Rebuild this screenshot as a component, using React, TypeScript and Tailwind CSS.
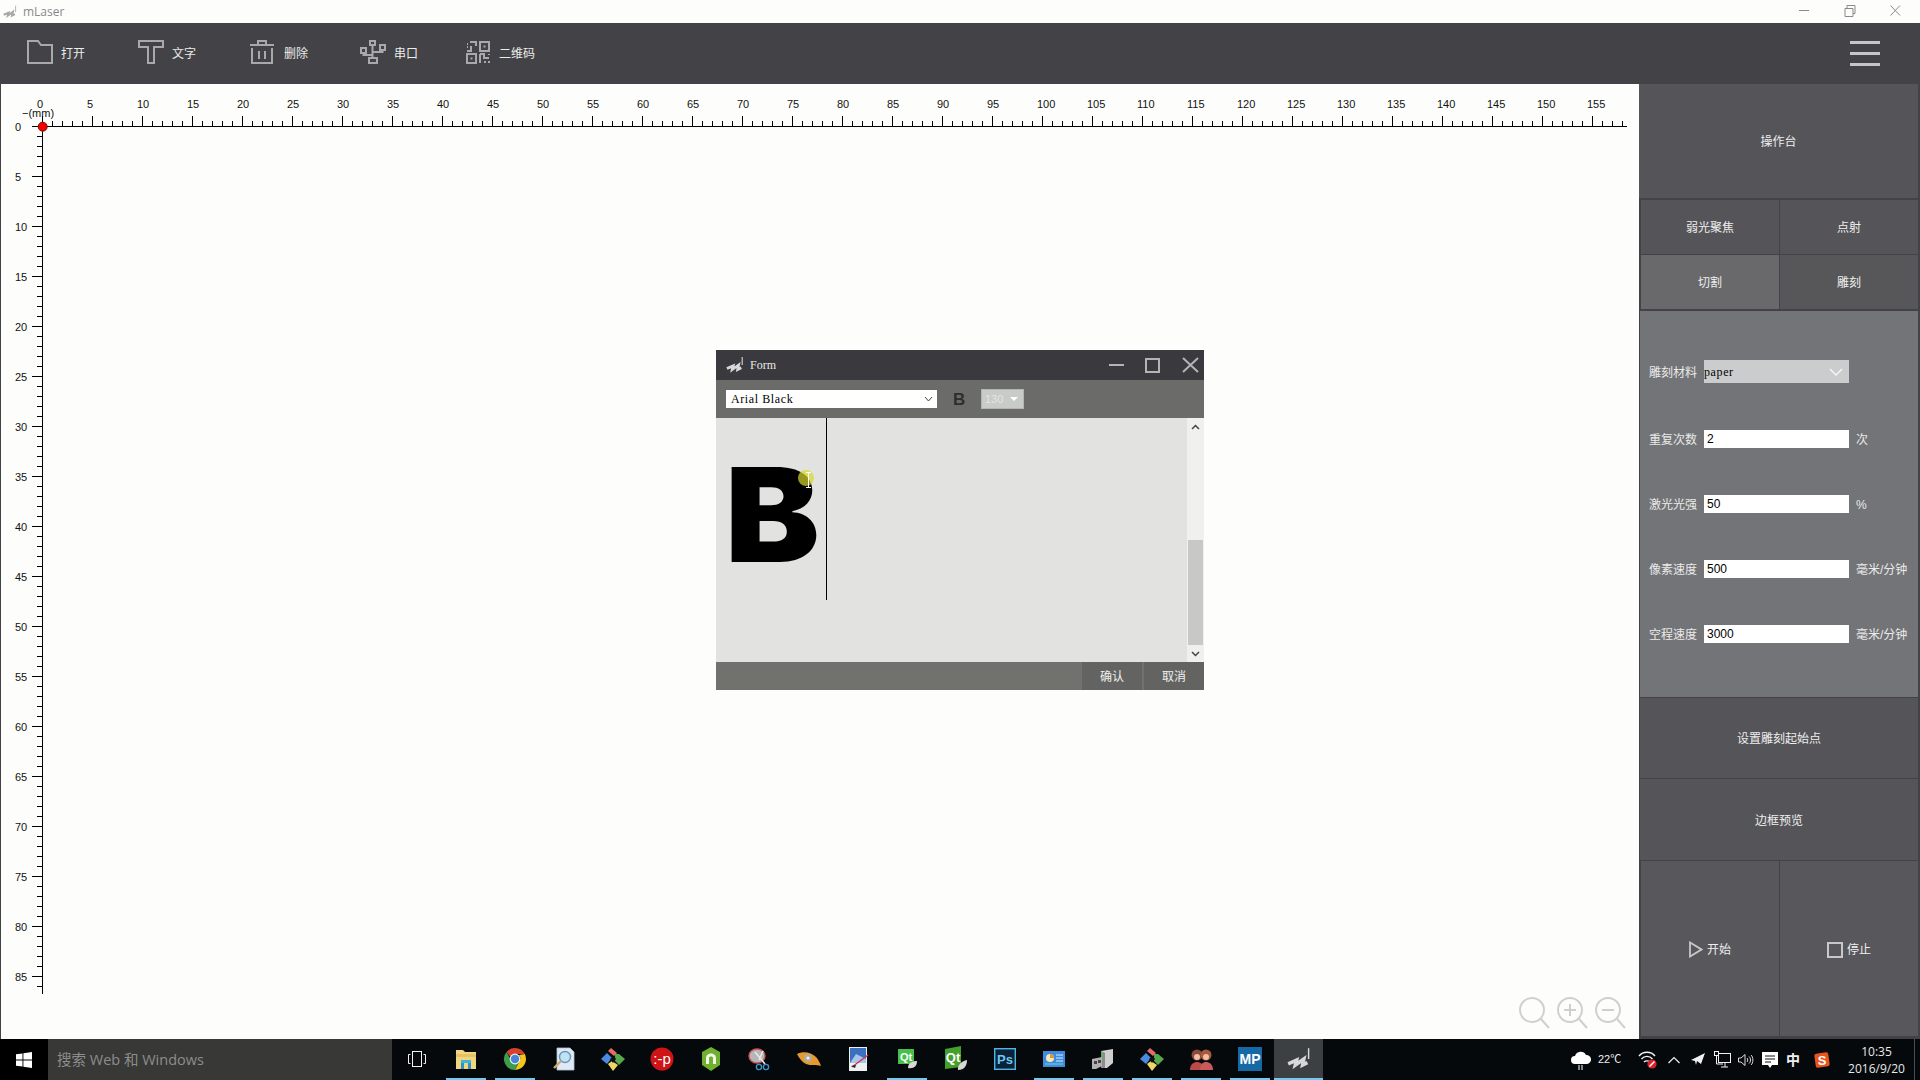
import type { ReactNode } from "react";

const cjk = "font-['Liberation_Sans','Noto_Sans_CJK_SC',sans-serif]";
const bitmapLike = "font-['Liberation_Serif','Noto_Sans_CJK_SC',serif]";

const ORIGIN_X = 42.5;
const ORIGIN_Y = 126.5;

function Logo({ size, color }: { size: number; color: string }) {
  return (
    <svg width={size} height={size} viewBox="0 0 20 20" fill="none">
      <path d="M1 14l7-3-1 4 7-5-1 5 4-2" stroke={color} strokeWidth="3" />
      <path d="M18 1v9" stroke={color} strokeWidth="1.2" />
    </svg>
  );
}

function Ruler() {
  const xs = Array.from({ length: 159 }, (_, i) => i);
  const ys = Array.from({ length: 87 }, (_, i) => i);
  return (
    <svg width="1638" height="955" viewBox="1 84 1638 955" className="block">
      <g stroke="#000" strokeWidth="1" shapeRendering="crispEdges">
        <path d={`M32 ${ORIGIN_Y}H1627`} />
        <path d={`M${ORIGIN_X} 116V994`} />
        {xs.map((i) => (
          <path key={i} d={`M${ORIGIN_X + i * 10} ${ORIGIN_Y}V${i % 5 === 0 ? 116 : 121}`} />
        ))}
        {ys.map((i) => (
          <path key={i} d={`M${ORIGIN_X} ${ORIGIN_Y + i * 10}H${i % 5 === 0 ? 32 : 37}`} />
        ))}
      </g>
      <g fontFamily="'Liberation Sans', sans-serif" fontSize="11" fill="#111">
        {xs.filter((i) => i % 5 === 0).map((i) => (
          <text key={i} x={ORIGIN_X + i * 10 - 5.5} y="108">{i}</text>
        ))}
        {ys.filter((i) => i % 5 === 0).map((i) => (
          <text key={i} x="15" y={ORIGIN_Y + i * 10 + 4}>{i}</text>
        ))}
        <text x="22" y="117" fontSize="11">−(mm)</text>
      </g>
      <circle cx="42.7" cy="126.7" r="4.5" fill="#f40000" stroke="#7a1010" strokeWidth="1" />
    </svg>
  );
}

function ToolIcon({ children, w = 26 }: { children: ReactNode; w?: number }) {
  return (
    <svg width={w} height="24" viewBox={`0 0 ${w} 24`} fill="none" stroke="#a9a9a9" strokeWidth="2" className="-mt-[4px] shrink-0">
      {children}
    </svg>
  );
}

const tools: { label: string; width: string; icon: ReactNode }[] = [
  { label: "打开", width: "w-[111px]", icon: <path d="M1 1H11L14 5H25V23H1Z" /> },
  { label: "文字", width: "w-[112px]", icon: <path d="M1 1H25V7H16V23H10V7H1Z" /> },
  {
    label: "删除",
    width: "w-[110px]",
    icon: <path d="M8 4V1H16V4M0 5H24M2 8V23H22V8M9 11V19M15 11V19" />,
  },
  {
    label: "串口",
    width: "w-[105px]",
    icon: (
      <>
        <rect x="10" y="1" width="5" height="4" />
        <rect x="1" y="8" width="5" height="5" />
        <rect x="20" y="5" width="5" height="5" />
        <rect x="9" y="18" width="8" height="5" />
        <path d="M12.5 5V18M3.5 13V15H12.5M22.5 10V12H12.5" />
      </>
    ),
  },
  {
    label: "二维码",
    width: "w-[80px]",
    icon: (
      <>
        <rect x="15" y="2" width="9" height="9" />
        <rect x="2" y="14" width="9" height="9" />
        <path d="M5 2H11V6M2 4H3M2 7H3M6 6V11H2" />
        <path d="M15 14H19V18H24M15 14V23M24 14V15M20 21V23M24 21V23" />
        <rect x="18.5" y="5.5" width="2" height="2" fill="#a9a9a9" stroke="none" />
        <rect x="5.5" y="17.5" width="2" height="2" fill="#a9a9a9" stroke="none" />
      </>
    ),
  },
];

function Field({ label, value, unit }: { label: string; value: string; unit: string }) {
  return (
    <div className="flex items-center h-[18px] pl-[9px]">
      <span className="w-[55px] pt-[2px] text-[12px] text-[#eaeaea]">{label}</span>
      <div className="w-[145px] h-[18px] bg-white pl-[3px] text-[12px] leading-[18px] text-black">{value}</div>
      <span className="ml-[7px] pt-[2px] text-[12px] text-[#eaeaea]">{unit}</span>
    </div>
  );
}

function PanelButton({ children, className }: { children: ReactNode; className: string }) {
  return <div className={`flex items-center justify-center pt-[2px] text-[12px] text-[#eeeeee] ${className}`}>{children}</div>;
}

function Dialog() {
  return (
    <div className="absolute left-[716px] top-[350px] w-[488px] h-[340px] flex flex-col">
      <div className="h-[30px] bg-[#3a3a3e] flex items-center pl-[10px]">
        <Logo size={18} color="#d8d8d8" />
        <span className={`ml-[6px] text-[12px] text-[#e8e8e8] ${bitmapLike}`}>Form</span>
        <svg width="96" height="16" viewBox="0 0 96 16" fill="none" stroke="#b4b4b4" strokeWidth="2" className="ml-auto">
          <path d="M1 8H16" />
          <rect x="38" y="2" width="13" height="13" />
          <path d="M75 1L90 15M90 1L75 15" />
        </svg>
      </div>
      <div className="h-[38px] bg-[#6b6c69] flex items-center pl-[10px]">
        <div className="w-[211px] h-[18px] bg-white flex items-center pl-[5px] pr-[4px]">
          <span className={`text-[12px] font-medium text-black tracking-[0.6px] ${bitmapLike}`}>Arial Black</span>
          <svg width="9" height="6" viewBox="0 0 9 6" fill="none" stroke="#444" strokeWidth="1" className="ml-auto">
            <path d="M1 1L4.5 5L8 1" />
          </svg>
        </div>
        <span className="ml-[16px] w-[12px] text-[17px] leading-none font-bold text-[#2e2e2e] font-['Liberation_Sans',sans-serif]">B</span>
        <div className="ml-[16px] w-[43px] h-[20px] bg-[#c9cbc9] border border-[#b4b6b4] flex items-center pl-[3px] gap-[7px]">
          <span className="text-[11px] text-[#e4e4e4] font-['Liberation_Sans',sans-serif]">130</span>
          <div className="w-0 h-0 border-x-[4px] border-x-transparent border-t-[4px] border-t-white" />
        </div>
      </div>
      <div className="h-[244px] bg-[#e2e3e0] flex">
        <div className="flex-1">
          <div className="w-[111px] h-[182px] border-r border-black pl-[9px] pt-[32px]">
            <span className="block origin-left scale-x-[1.09] text-[130px] leading-[130px] font-black text-black font-['Inter',sans-serif]">B</span>
          </div>
        </div>
        <div className="w-[17px] bg-[#f0f0ee] flex flex-col items-center">
          <div className="h-[18px] flex items-center">
            <svg width="9" height="6" viewBox="0 0 9 6" fill="none" stroke="#444" strokeWidth="1.5"><path d="M1 5L4.5 1.5L8 5" /></svg>
          </div>
          <div className="flex-1" />
          <div className="w-[15px] h-[105px] bg-[#c8c9c6]" />
          <div className="h-[17px] flex items-center">
            <svg width="9" height="6" viewBox="0 0 9 6" fill="none" stroke="#444" strokeWidth="1.5"><path d="M1 1L4.5 4.5L8 1" /></svg>
          </div>
        </div>
      </div>
      <div className={`h-[28px] bg-[#71726e] flex justify-end text-[12px] text-[#f0f0f0] ${cjk}`}>
        <div className="w-[60px] mr-[2px] pt-[2px] bg-[#636461] flex items-center justify-center">确认</div>
        <div className="w-[60px] pt-[2px] bg-[#636461] flex items-center justify-center">取消</div>
      </div>
      {/* cursor highlight */}
      <div className="absolute left-[82px] top-[120px] w-[16px] h-[16px] rounded-full bg-[#d8d82e]/70" />
      <svg width="7" height="16" viewBox="0 0 7 16" fill="none" stroke="#fff" strokeWidth="1" className="absolute left-[89px] top-[122px]">
        <path d="M1 0.5H6M3.5 0.5V15.5M1 15.5H6" />
      </svg>
    </div>
  );
}

function Chrome() {
  return (
    <svg width="24" height="24" viewBox="0 0 24 24">
      <path d="M12 1A11 11 0 0 1 21.8 7H12A5 5 0 0 0 7.5 10L3.5 5A11 11 0 0 1 12 1Z" fill="#d8412f" />
      <path d="M21.8 7A11 11 0 0 1 12 23L16.5 14A5 5 0 0 0 16 8Z" fill="#f5c518" />
      <path d="M3.5 5L8 13A5 5 0 0 0 16 15L12 23A11 11 0 0 1 3.5 5Z" fill="#3c9d4a" />
      <circle cx="12" cy="12" r="5.4" fill="#f2f2f2" />
      <circle cx="12" cy="12" r="4.2" fill="#4a83d8" />
    </svg>
  );
}

function GitDiamond() {
  return (
    <svg width="24" height="24" viewBox="0 0 24 24">
      <path d="M7 4L10 1L16 6L13 9Z" fill="#e66a6a" />
      <path d="M14 7L18 7L24 12L18 18L14 14Z" fill="#56a84a" />
      <path d="M7 17L11 14L17 18L12 24Z" fill="#f0d765" />
      <path d="M0 12L6 6L11 11L6 17Z" fill="#4a8be0" />
      <path d="M9 12L13 9L15 12L12 16Z" fill="#101010" />
    </svg>
  );
}

const taskIcons: { key: string; on: boolean; icon: ReactNode }[] = [
  {
    key: "task", on: false,
    icon: (
      <svg width="18" height="16" viewBox="0 0 18 16" fill="none" stroke="#f2f2f2" strokeWidth="1">
        <rect x="4.5" y="0.5" width="9" height="15" />
        <path d="M2.5 3.5H0.5V12.5H2.5M15.5 3.5H17.5V12.5H15.5" />
      </svg>
    ),
  },
  {
    key: "explorer", on: true,
    icon: (
      <svg width="24" height="24" viewBox="0 0 24 24">
        <path d="M2 3H9L11 5H22V22H2Z" fill="#f1d580" />
        <path d="M2 7H22V10H2Z" fill="#e7c262" />
        <path d="M7 16H17V13H7Z" fill="#3fb3df" />
        <path d="M7 16H10V22H7ZM14 16H17V22H14Z" fill="#2f93c4" />
      </svg>
    ),
  },
  { key: "chrome", on: true, icon: <Chrome /> },
  {
    key: "search", on: false,
    icon: (
      <svg width="24" height="24" viewBox="0 0 24 24">
        <path d="M5 1H18L22 5V23H5Z" fill="#dfe9f5" stroke="#b4c2d4" strokeWidth="0.8" />
        <circle cx="13" cy="10" r="5.5" fill="#bfe2f4" stroke="#6d95b6" strokeWidth="1.4" />
        <path d="M9 14L2 21" stroke="#d5a76a" strokeWidth="2.4" />
      </svg>
    ),
  },
  { key: "git1", on: false, icon: <GitDiamond /> },
  {
    key: "tongue", on: false,
    icon: (
      <svg width="24" height="24" viewBox="0 0 24 24">
        <circle cx="12" cy="12" r="11.5" fill="#cf1418" />
        <text x="12" y="17" textAnchor="middle" fontSize="15" fontFamily="'Liberation Sans', sans-serif" fill="#fff">:-p</text>
      </svg>
    ),
  },
  {
    key: "hex", on: false,
    icon: (
      <svg width="22" height="24" viewBox="0 0 22 24">
        <path d="M11 0L20 5V18L11 24L2 18V5Z" fill="#6fb02e" />
        <path d="M6 17V11C6 5 16 5 16 11V17H13V11C13 9 9 9 9 11V17Z" fill="#f1f6e6" />
      </svg>
    ),
  },
  {
    key: "snip", on: false,
    icon: (
      <svg width="24" height="24" viewBox="0 0 24 24" fill="none">
        <ellipse cx="9" cy="9" rx="8" ry="7" fill="#b6b6b8" stroke="#c9565c" strokeWidth="1.4" />
        <path d="M7 5L17 17M15 4L11 13" stroke="#e8e8e8" strokeWidth="1.6" />
        <circle cx="18" cy="20" r="2.6" stroke="#3f94c8" strokeWidth="1.4" />
        <circle cx="11" cy="20" r="2.6" stroke="#3f94c8" strokeWidth="1.4" />
      </svg>
    ),
  },
  {
    key: "eye", on: false,
    icon: (
      <svg width="24" height="18" viewBox="0 0 24 18">
        <path d="M0 4C6 1 14 2 19 7C21 9 23 13 24 16C19 14 14 16 9 14C5 12 2 8 0 4Z" fill="#e6992e" />
        <circle cx="11" cy="8" r="4" fill="#b3ab96" />
        <circle cx="11" cy="8" r="1.6" fill="#eee" />
      </svg>
    ),
  },
  {
    key: "image", on: false,
    icon: (
      <svg width="22" height="24" viewBox="0 0 22 24">
        <rect x="2" y="0" width="18" height="24" fill="#eef0f2" />
        <rect x="3" y="1" width="16" height="15" fill="#3b6fc0" />
        <path d="M3 16L9 7L19 12V16Z" fill="#a8c4e8" />
        <path d="M5 20L21 8" stroke="#c53b4a" strokeWidth="1.4" />
        <path d="M4 19L9 18L8 21Z" fill="#222" />
      </svg>
    ),
  },
  {
    key: "qt1", on: true,
    icon: (
      <svg width="24" height="22" viewBox="0 0 24 22">
        <path d="M3 1H19V16H3Z" fill="#46c04a" />
        <text x="11" y="13" textAnchor="middle" fontSize="11" fontWeight="700" fontFamily="'Liberation Sans', sans-serif" fill="#fff">Qt</text>
        <path d="M13 20C13 15 17 13 22 13C22 18 19 21 13 20Z" fill="#d8d8d4" />
      </svg>
    ),
  },
  {
    key: "qt2", on: false,
    icon: (
      <svg width="24" height="26" viewBox="0 0 24 26">
        <path d="M1 3L17 0V21L1 23Z" fill="#43a02c" />
        <text x="9" y="16" textAnchor="middle" fontSize="13" fontWeight="700" fontFamily="'Liberation Sans', sans-serif" fill="#fff">Qt</text>
        <path d="M14 24C13 19 18 15 23 14C23 20 20 24 14 24Z" fill="#d8d8d4" />
      </svg>
    ),
  },
  {
    key: "ps", on: false,
    icon: (
      <svg width="22" height="22" viewBox="0 0 22 22">
        <rect x="0.7" y="0.7" width="20.6" height="20.6" fill="#0b2238" stroke="#4fb6e8" strokeWidth="1.4" />
        <text x="11" y="16" textAnchor="middle" fontSize="13" fontWeight="700" fontFamily="'Liberation Sans', sans-serif" fill="#6cc8f0">Ps</text>
      </svg>
    ),
  },
  {
    key: "card", on: true,
    icon: (
      <svg width="22" height="16" viewBox="0 0 22 16">
        <rect width="22" height="16" fill="#3c8ce0" />
        <circle cx="7" cy="7" r="4" fill="#f5e7c0" />
        <path d="M7 7V3A4 4 0 0 1 11 7Z" fill="#e8942c" />
        <path d="M13 4H20M13 7H20M13 10H20" stroke="#d8ecfa" strokeWidth="1.2" />
        <path d="M2 13H20" stroke="#7fd0c8" strokeWidth="1" />
      </svg>
    ),
  },
  {
    key: "machine", on: true,
    icon: (
      <svg width="22" height="20" viewBox="0 0 22 20">
        <path d="M9 2L21 0V14L15 19H9Z" fill="#cfcfcf" />
        <path d="M9 2L13 4V19H9Z" fill="#8d8d8d" />
        <rect x="10" y="5" width="2" height="3" fill="#46c04a" />
        <path d="M0 10L10 8V17L4 20H0Z" fill="#b0b0b0" />
        <rect x="2" y="12" width="3" height="3" fill="#444" />
        <rect x="6" y="11" width="3" height="3" fill="#444" />
      </svg>
    ),
  },
  { key: "git2", on: true, icon: <GitDiamond /> },
  {
    key: "people", on: true,
    icon: (
      <svg width="24" height="22" viewBox="0 0 24 22">
        <circle cx="8" cy="7" r="5.5" fill="#8c4a38" />
        <circle cx="17" cy="7" r="5.5" fill="#a85a3e" />
        <circle cx="8" cy="9" r="3" fill="#f0c0a8" />
        <circle cx="17" cy="9" r="3" fill="#f0c0a8" />
        <path d="M1 22C1 16 5 14 8 14C11 14 15 16 15 22Z" fill="#b84a4a" />
        <path d="M11 22C11 16 14 14 17 14C20 14 24 16 24 22Z" fill="#c85a5a" />
      </svg>
    ),
  },
  {
    key: "mp", on: true,
    icon: (
      <svg width="24" height="24" viewBox="0 0 24 24">
        <rect width="24" height="24" fill="#156aa6" />
        <text x="12" y="17" textAnchor="middle" fontSize="14" fontWeight="700" fontFamily="'Liberation Sans', sans-serif" fill="#fff">MP</text>
      </svg>
    ),
  },
];

function Tray() {
  return (
    <div className={`ml-auto h-full flex items-center pr-[5px] text-[#f0f0f0] ${cjk}`}>
      <svg width="20" height="20" viewBox="0 0 20 20" fill="#fff">
        <path d="M4 14A4 4 0 0 1 4 6A6 6 0 0 1 15 5A4.5 4.5 0 0 1 16 14Z" />
        <path d="M8 15V20M11 15V20" stroke="#fff" strokeWidth="1" />
      </svg>
      <span className="ml-[7px] w-[23px] text-[11px]">22℃</span>
      <svg width="20" height="20" viewBox="0 0 20 20" fill="none" stroke="#f4f4f4" strokeWidth="1.4" className="ml-[17px]">
        <path d="M1 6C5 1 13 1 17 6M3.5 9C6.5 5.5 11.5 5.5 14.5 9M6 12C7.5 10.5 10.5 10.5 12 12" />
        <circle cx="14" cy="14" r="4.6" fill="#d8222a" stroke="none" />
        <path d="M11.5 16.5L16.5 11.5" stroke="#fff" strokeWidth="1.4" />
      </svg>
      <svg width="12" height="8" viewBox="0 0 12 8" fill="none" stroke="#f0f0f0" strokeWidth="1.2" className="ml-[10px]">
        <path d="M0.5 7L6 1.5L11.5 7" />
      </svg>
      <svg width="14" height="13" viewBox="0 0 14 13" fill="#f0f0f0" className="ml-[11px]">
        <path d="M0 7L14 0L10 11L6 8L5 12L4 8Z" />
      </svg>
      <svg width="17" height="17" viewBox="0 0 17 17" fill="none" stroke="#f0f0f0" strokeWidth="1" className="ml-[9px]">
        <rect x="4.5" y="2.5" width="12" height="9" />
        <rect x="0.5" y="0.5" width="4" height="4" fill="#0a0e12" />
        <path d="M2.5 5V13H9M11 12V16M7 16H14" />
      </svg>
      <svg width="16" height="14" viewBox="0 0 16 14" fill="none" stroke="#d8d8d8" strokeWidth="1" className="ml-[7px]">
        <path d="M0.5 5H3L7 1.5V12.5L3 9H0.5Z" />
        <path d="M9 5C10 6 10 8 9 9M11 3.5C13 5 13 9 11 10.5M13 2C15.5 4 15.5 10 13 12" />
      </svg>
      <svg width="16" height="16" viewBox="0 0 16 16" className="ml-[8px]">
        <path d="M0 0H16V13H10L8 16L6 13H0Z" fill="#fff" />
        <path d="M3 4H13M3 7H13M3 10H9" stroke="#111" strokeWidth="1" />
      </svg>
      <span className="ml-[8px] w-[14px] text-[14px] font-bold leading-none">中</span>
      <svg width="16" height="16" viewBox="0 0 16 16" className="ml-[14px]">
        <rect x="1" y="1" width="14" height="14" rx="2" fill="#e8541e" transform="rotate(-8 8 8)" />
        <text x="8" y="13" textAnchor="middle" fontSize="13" fontWeight="700" fontFamily="'Liberation Sans', sans-serif" fill="#fff">S</text>
      </svg>
      <div className="ml-[17px] w-[59px] flex flex-col items-center text-[12px] leading-[17px] text-[#e8e8e8] font-['Open_Sans',sans-serif]">
        <span>10:35</span>
        <span className="whitespace-nowrap">2016/9/20</span>
      </div>
      <div className="ml-[8px] w-px h-full bg-[#4a4d50]" />
    </div>
  );
}

export default function App() {
  return (
    <div className={`relative w-[1920px] h-[1080px] overflow-hidden bg-[#434347] ${cjk}`}>
      {/* window title */}
      <div className="h-[23px] bg-[#fdfefc] flex items-center pl-[3px]">
        <Logo size={14} color="#a8a8a8" />
        <span className="ml-[6px] text-[12px] text-[#8a8a8a] font-['Open_Sans',sans-serif]">mLaser</span>
        <svg width="110" height="14" viewBox="0 0 110 14" fill="none" stroke="#8a8a8a" strokeWidth="1" className="ml-auto mr-[11px] -mt-[4px]">
          <path d="M0 7.5H10M46 5.5V13.5H54V5.5ZM48 5V2.5H56V10.5H54M91.5 2.5L101 12.5M101 2.5L91.5 12.5" />
        </svg>
      </div>

      {/* toolbar */}
      <div className="h-[61px] flex items-center pl-[27px]">
        {tools.map((t) => (
          <div key={t.label} className={`flex items-center gap-[8px] ${t.width}`}>
            <ToolIcon>{t.icon}</ToolIcon>
            <span className="text-[12px] text-[#ececec] whitespace-nowrap">{t.label}</span>
          </div>
        ))}
        <div className="ml-auto mr-[40px] -mt-[1px] flex flex-col gap-[8px]">
          <div className="w-[30px] h-[3px] bg-[#c6c6c8]" />
          <div className="w-[30px] h-[3px] bg-[#c6c6c8]" />
          <div className="w-[30px] h-[3px] bg-[#c6c6c8]" />
        </div>
      </div>

      {/* workspace */}
      <div className="h-[955px] flex">
        <div className="relative w-[1639px] pl-[1px]">
          <div className="bg-[#fdfefc] h-[955px]">
            <Ruler />
          </div>
          <svg width="112" height="40" viewBox="0 0 112 40" fill="none" stroke="#cfcfcf" strokeWidth="2" className="absolute left-[1519px] top-[913px]">
            <circle cx="13" cy="13" r="12" />
            <path d="M22 22L30 31" />
            <circle cx="51" cy="13" r="12" />
            <path d="M60 22L68 31M45 13H57M51 7V19" />
            <circle cx="89" cy="13" r="12" />
            <path d="M98 22L106 31M83 13H95" />
          </svg>
        </div>

        <div className="w-[281px] pr-[2px] flex flex-col">
          <PanelButton className="h-[114px] bg-[#555559]">操作台</PanelButton>
          <div className="mt-[2px] pl-[2px] grid grid-cols-2 gap-px h-[109px]">
            <PanelButton className="bg-[#555559]">弱光聚焦</PanelButton>
            <PanelButton className="bg-[#555559]">点射</PanelButton>
            <PanelButton className="bg-[#69696b]">切割</PanelButton>
            <PanelButton className="bg-[#575759]">雕刻</PanelButton>
          </div>
          <div className="mt-[2px] h-[386px] ml-[1px] bg-[#737477] pt-[49px] flex flex-col gap-[47px]">
            <div className="flex items-center h-[23px] pl-[9px]">
              <span className="w-[55px] pt-[2px] text-[12px] text-[#eaeaea]">雕刻材料</span>
              <div className={`w-[145px] h-[23px] pt-[1px] bg-[#cbcccd] flex items-center pr-[6px] text-[12px] text-black tracking-[0.6px] ${bitmapLike}`}>
                paper
                <svg width="14" height="8" viewBox="0 0 14 8" fill="none" stroke="#f4f4f4" strokeWidth="1.5" className="ml-auto">
                  <path d="M1 1L7 7L13 1" />
                </svg>
              </div>
            </div>
            <Field label="重复次数" value="2" unit="次" />
            <Field label="激光光强" value="50" unit="%" />
            <Field label="像素速度" value="500" unit="毫米/分钟" />
            <Field label="空程速度" value="3000" unit="毫米/分钟" />
          </div>
          <PanelButton className="mt-px ml-[1px] h-[80px] bg-[#555559]">设置雕刻起始点</PanelButton>
          <PanelButton className="mt-px ml-[1px] h-[81px] bg-[#555559]">边框预览</PanelButton>
          <div className="mt-px pl-[2px] flex-1 pb-[3px] grid grid-cols-2 gap-px">
            <PanelButton className="bg-[#58585c] gap-[4px]">
              <svg width="14" height="17" viewBox="0 0 14 17" fill="none" stroke="#c8c8c8" strokeWidth="1.8">
                <path d="M1 1.5V15.5L12.5 8.5Z" />
              </svg>
              开始
            </PanelButton>
            <PanelButton className="bg-[#58585c] gap-[4px]">
              <div className="w-[16px] h-[16px] border-2 border-[#c8c8c8]" />
              停止
            </PanelButton>
          </div>
        </div>
      </div>

      {/* taskbar */}
      <div className="h-[41px] bg-[#05090c] flex">
        <div className="w-[48px] h-full bg-black flex items-center justify-center">
          <svg width="16" height="16" viewBox="0 0 16 16" fill="#fff">
            <path d="M0 2.3L6.5 1.4V7.5H0ZM7.4 1.3L16 0V7.5H7.4ZM0 8.4H6.5V14.6L0 13.7ZM7.4 8.4H16V16L7.4 14.7Z" />
          </svg>
        </div>
        <div className="w-[344px] h-full bg-[#383836] flex items-center pl-[9px] text-[14.5px] text-[#8d8d8d] font-['Open_Sans','Noto_Sans_CJK_SC',sans-serif]">
          搜索 Web 和 Windows
        </div>
        {taskIcons.map((t) => (
          <div key={t.key} className="w-[49px] h-full flex flex-col items-center">
            <div className="flex-1 flex items-center justify-center">{t.icon}</div>
            <div className={`h-[2px] w-[40px] ${t.on ? "bg-[#76c8f0]" : ""}`} />
          </div>
        ))}
        <div className="w-[49px] h-full bg-[#3c4043] flex flex-col items-center">
          <div className="flex-1 flex items-center justify-center">
            <Logo size={24} color="#d8d8d8" />
          </div>
          <div className="h-[2px] w-full bg-[#76c8f0]" />
        </div>
        <Tray />
      </div>

      <Dialog />
    </div>
  );
}
